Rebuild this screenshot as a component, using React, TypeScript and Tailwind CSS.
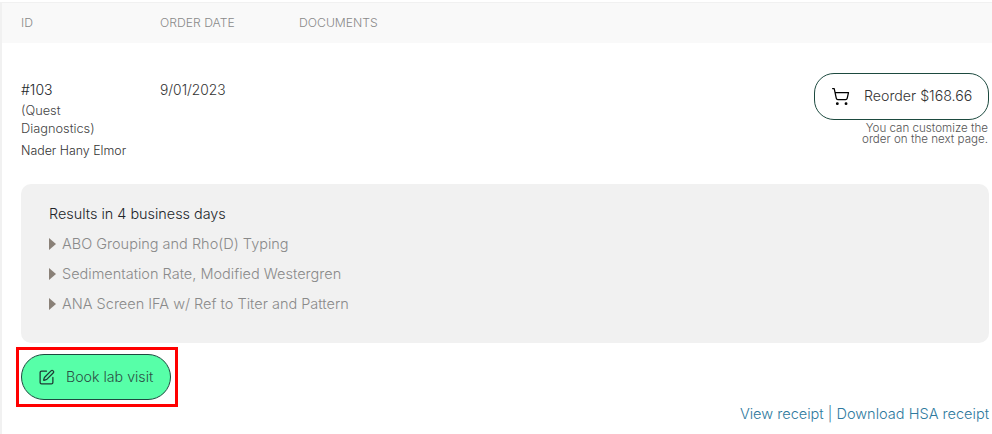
import React from 'react';
import { ShoppingCart, SquarePen } from 'lucide-react';

const tests = [
    'ABO Grouping and Rho(D) Typing',
    'Sedimentation Rate, Modified Westergren',
    'ANA Screen IFA w/ Ref to Titer and Pattern',
];

const App: React.FC = () => {
    return (
        <div className="w-[992px] h-[434px] overflow-hidden bg-white pt-[2px] font-['Inter',sans-serif] font-light text-[#212529]">
            <div className="h-[432px] border-l-2 border-t border-[#f1f1f1]">
                {/* cabecalho da tabela */}
                <div className="flex h-[40px] items-center bg-[#f9f9f9] pl-[19px] text-[12.2px] text-[#8a8a8a]">
                    <div className="w-[139px]">ID</div>
                    <div className="w-[139px]">ORDER DATE</div>
                    <div>DOCUMENTS</div>
                </div>

                <div className="flex h-[141px] pl-[19px] pr-[3px]">
                    <div className="w-[139px] pt-[37px]">
                        <div className="mb-[2px] text-[14px] leading-[20px]">#103</div>
                        <div className="w-[90px] text-[12.8px] leading-[18px] text-[#444]">(Quest Diagnostics)</div>
                        <div className="mt-[4px] text-[12.4px] leading-[18px] text-[#333]">Nader Hany Elmor</div>
                    </div>
                    <div className="flex-1 pt-[37px] text-[13.8px] leading-[20px] text-[#333]">9/01/2023</div>
                    <div className="flex w-[180px] flex-col items-end pt-[30px]">
                        <button className="flex h-[47px] w-[175px] items-center rounded-[20px] border border-[#1d4a3f] pb-[2px] pl-[16px] text-[14.2px] text-[#333]">
                            <ShoppingCart size={19} strokeWidth={1.6} className="mt-[2px] text-black" />
                            <span className="ml-[14px]">Reorder $168.66</span>
                        </button>
                        <div className="mt-[3px] pr-[1px] text-right text-[11.6px] leading-[11px] text-[#555]">
                            You can customize the
                            <br />
                            order on the next page.
                        </div>
                    </div>
                </div>

                <div className="mx-[19px] mr-[3px] h-[159px] rounded-[10px] bg-[#f1f1f1] pl-[28px] pt-[20px]">
                    <div className="text-[14.4px] leading-[20px] text-[#212529]">Results in 4 business days</div>
                    {tests.map(test => (
                        <div key={test} className="mt-[10px] flex h-[20px] items-center text-[14.5px] text-[#8a8a8a] first:mt-[2px]">
                            <span className="mr-[6px] h-0 w-0 border-y-[6px] border-l-[7px] border-y-transparent border-l-[#8a8178]" />
                            {test}
                        </div>
                    ))}
                </div>

                <div className="ml-[14px] mt-[4px] flex h-[60px] w-[162px] items-center border-[3px] border-[#ff0000] pl-[2px]">
                    <button className="flex h-[46px] w-[150px] items-center rounded-[23px] border border-[#1d4a3f] bg-[#57ffa8] pl-[16px] text-[14.2px] text-[#2b4f45]">
                        <SquarePen size={17} strokeWidth={1.8} className="text-[#1f3b35]" />
                        <span className="ml-[11px]">Book lab visit</span>
                    </button>
                </div>

                <div className="mt-[-3px] pr-[3px] text-right text-[14.55px] leading-[20px] text-[#2f7a9e]">
                    View receipt | Download HSA receipt
                </div>
            </div>
        </div>
    );
};

export default App;
